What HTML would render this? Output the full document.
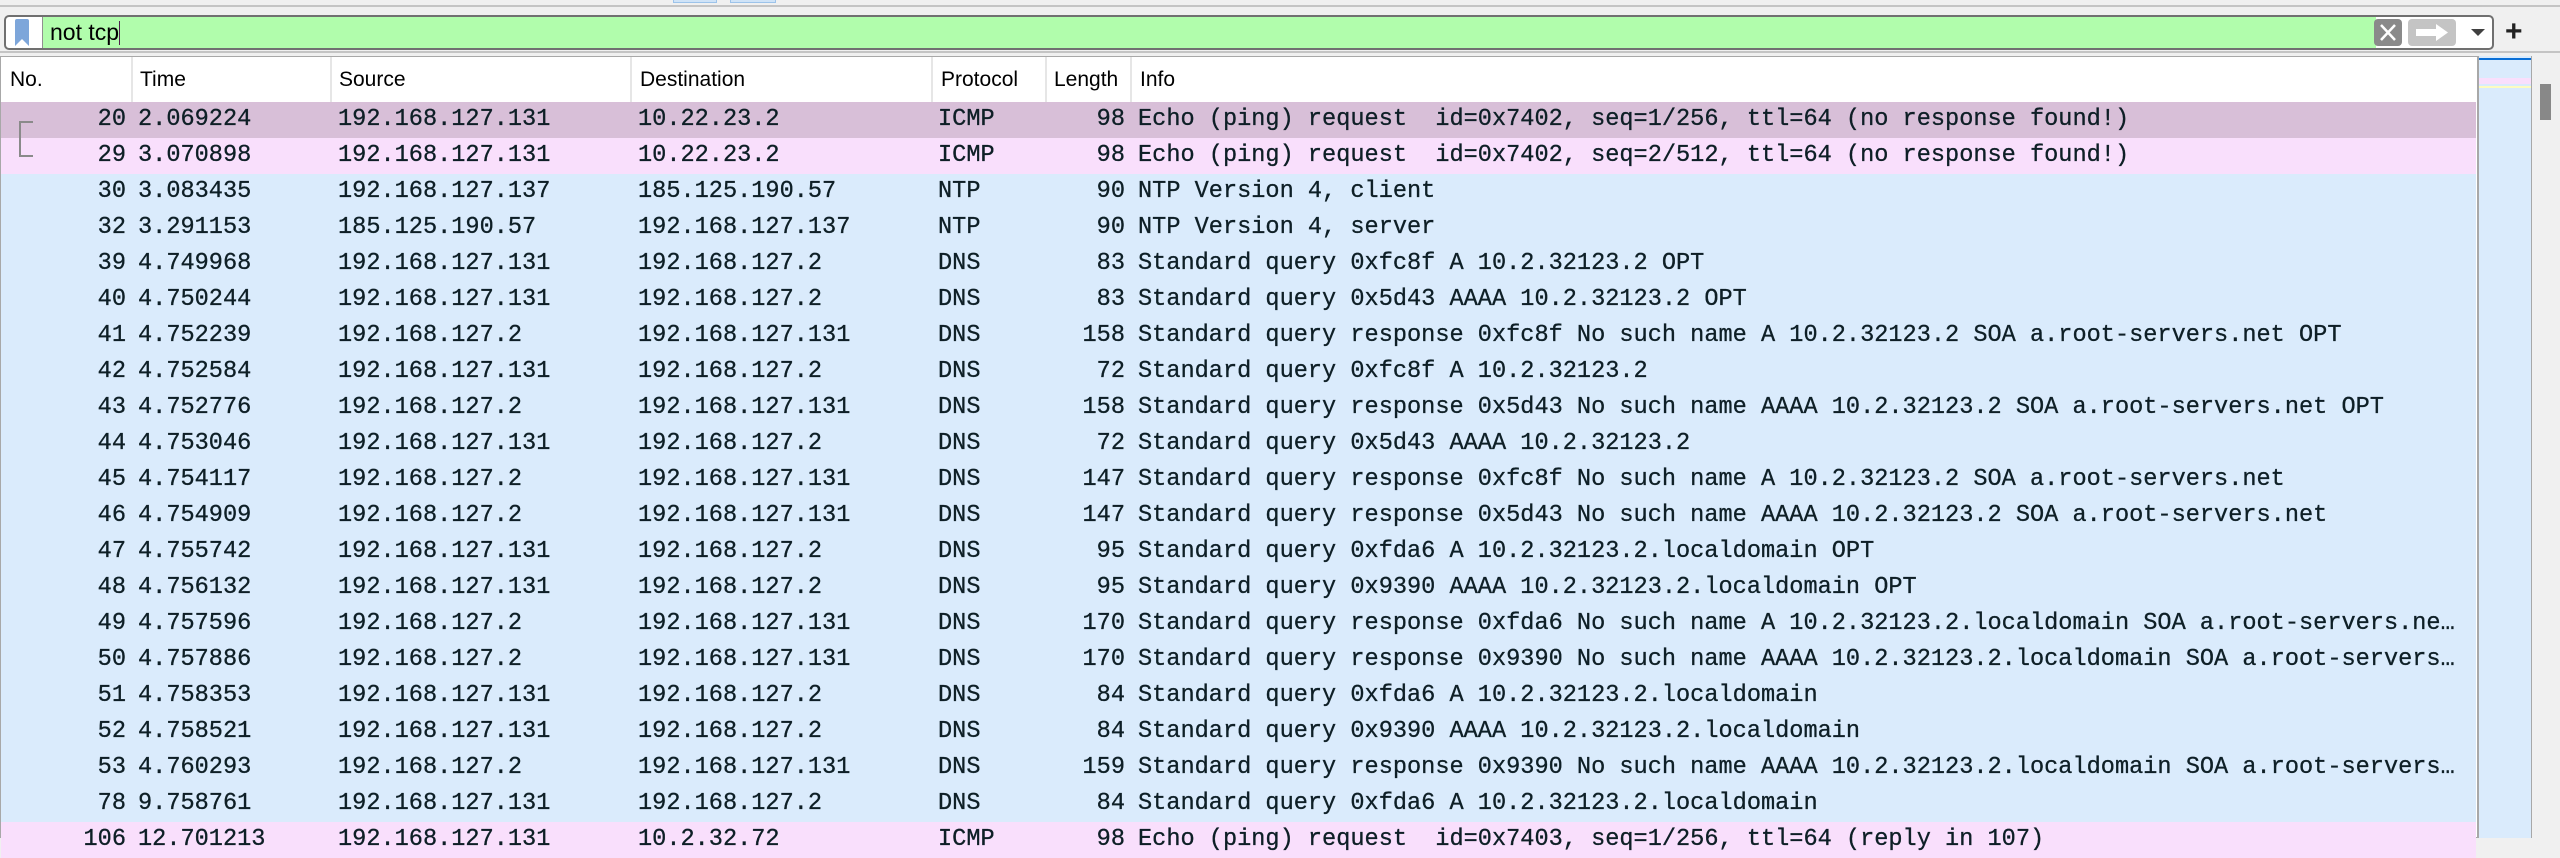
<!DOCTYPE html>
<html><head><meta charset="utf-8"><style>
*{margin:0;padding:0;box-sizing:border-box}
body{width:2560px;height:838px;overflow:hidden;background:#f0f0f0;position:relative;font-family:"Liberation Sans",sans-serif}
.a{position:absolute}
.hdr{position:absolute;top:57px;height:45px;left:1px;width:2475px;background:#fff;font-size:21px;color:#000}
.hdr span{position:absolute;top:11px}
.sep{position:absolute;top:0;width:2px;height:45px;background:#e6e6e6}
.row{position:absolute;left:1px;width:2475px;height:36px;font-family:"Liberation Mono",monospace;font-size:23.6px;line-height:36px;color:#0e1f26;white-space:pre;overflow:hidden;-webkit-text-stroke:0.3px #0e1f26}
.row span{position:absolute;top:0}
.no{right:auto;width:125px;text-align:right;left:0}
.len{width:1124px;text-align:right;left:0}
.c1{left:137px}.c2{left:337px}.c3{left:637px}.c4{left:937px}.c5{left:1137px;width:1336px;overflow:hidden;text-overflow:ellipsis}
.b{background:#daebfc}.p{background:#f9dffc}.s{background:#d8bfd8}
</style></head><body>
<div class="a" style="left:673px;top:0;width:44px;height:3px;background:#cfe3f7;border:1px solid #9cc3ea;border-top:none"></div>
<div class="a" style="left:730px;top:0;width:46px;height:3px;background:#cfe3f7;border:1px solid #9cc3ea;border-top:none"></div>
<div class="a" style="left:0;top:5px;width:2560px;height:2px;background:#c4c4c4"></div>
<div class="a" style="left:0;top:51px;width:2560px;height:2px;background:#c4c4c4"></div>
<div class="a" style="left:4px;top:15px;width:2490px;height:35px;border:2px solid #707070;border-radius:5px;background:#fff;overflow:hidden">
 <div class="a" style="left:36px;top:0;width:2334px;height:31px;background:#b1fdac;border-left:1px solid #909090"></div>
 <svg class="a" style="left:8px;top:2px" width="16" height="27"><path d="M1 2 Q1 0 3 0 H13 Q15 0 15 2 V27 L8 20 L1 27Z" fill="#7da6da"/></svg>
 <div class="a" style="left:44px;top:2px;font-size:23px;color:#000;line-height:27px">not tcp<span style="display:inline-block;width:1px;height:24px;background:#502050;vertical-align:-5px"></span></div>
 <div class="a" style="left:2368px;top:2px;width:28px;height:27px;background:#8a8a8a;border-radius:4px"><svg width="28" height="27"><path d="M7 6 L21 21 M21 6 L7 21" stroke="#fff" stroke-width="2.5"/></svg></div>
 <div class="a" style="left:2402px;top:2px;width:48px;height:27px;background:#c4c4c4;border-radius:4px"><svg width="48" height="27"><path d="M8 10 H28 V5 L40 13.5 L28 22 V17 H8Z" fill="#fff"/></svg></div>
 <svg class="a" style="left:2465px;top:10px" width="14" height="10"><path d="M0 2 H14 L7 9Z" fill="#404040"/></svg>
</div>
<div class="a" style="left:2505px;top:19px;font-size:30px;font-weight:bold;color:#222;line-height:26px">+</div>
<div class="a" style="left:0;top:56px;width:2478px;height:782px;border:1px solid #a8a8a8;background:#fff"></div>
<div class="hdr">
 <span style="left:9px">No.</span><div class="sep" style="left:130px"></div>
 <span style="left:139px">Time</span><div class="sep" style="left:329px"></div>
 <span style="left:338px">Source</span><div class="sep" style="left:629px"></div>
 <span style="left:639px">Destination</span><div class="sep" style="left:930px"></div>
 <span style="left:940px">Protocol</span><div class="sep" style="left:1044px"></div>
 <span style="left:1053px">Length</span><div class="sep" style="left:1129px"></div>
 <span style="left:1139px">Info</span>
</div>
<div class="row s" style="top:102px"><span class="no">20</span><span class="c1">2.069224</span><span class="c2">192.168.127.131</span><span class="c3">10.22.23.2</span><span class="c4">ICMP</span><span class="len">98</span><span class="c5">Echo (ping) request  id=0x7402, seq=1/256, ttl=64 (no response found!)</span></div>
<div class="row p" style="top:138px"><span class="no">29</span><span class="c1">3.070898</span><span class="c2">192.168.127.131</span><span class="c3">10.22.23.2</span><span class="c4">ICMP</span><span class="len">98</span><span class="c5">Echo (ping) request  id=0x7402, seq=2/512, ttl=64 (no response found!)</span></div>
<div class="row b" style="top:174px"><span class="no">30</span><span class="c1">3.083435</span><span class="c2">192.168.127.137</span><span class="c3">185.125.190.57</span><span class="c4">NTP</span><span class="len">90</span><span class="c5">NTP Version 4, client</span></div>
<div class="row b" style="top:210px"><span class="no">32</span><span class="c1">3.291153</span><span class="c2">185.125.190.57</span><span class="c3">192.168.127.137</span><span class="c4">NTP</span><span class="len">90</span><span class="c5">NTP Version 4, server</span></div>
<div class="row b" style="top:246px"><span class="no">39</span><span class="c1">4.749968</span><span class="c2">192.168.127.131</span><span class="c3">192.168.127.2</span><span class="c4">DNS</span><span class="len">83</span><span class="c5">Standard query 0xfc8f A 10.2.32123.2 OPT</span></div>
<div class="row b" style="top:282px"><span class="no">40</span><span class="c1">4.750244</span><span class="c2">192.168.127.131</span><span class="c3">192.168.127.2</span><span class="c4">DNS</span><span class="len">83</span><span class="c5">Standard query 0x5d43 AAAA 10.2.32123.2 OPT</span></div>
<div class="row b" style="top:318px"><span class="no">41</span><span class="c1">4.752239</span><span class="c2">192.168.127.2</span><span class="c3">192.168.127.131</span><span class="c4">DNS</span><span class="len">158</span><span class="c5">Standard query response 0xfc8f No such name A 10.2.32123.2 SOA a.root-servers.net OPT</span></div>
<div class="row b" style="top:354px"><span class="no">42</span><span class="c1">4.752584</span><span class="c2">192.168.127.131</span><span class="c3">192.168.127.2</span><span class="c4">DNS</span><span class="len">72</span><span class="c5">Standard query 0xfc8f A 10.2.32123.2</span></div>
<div class="row b" style="top:390px"><span class="no">43</span><span class="c1">4.752776</span><span class="c2">192.168.127.2</span><span class="c3">192.168.127.131</span><span class="c4">DNS</span><span class="len">158</span><span class="c5">Standard query response 0x5d43 No such name AAAA 10.2.32123.2 SOA a.root-servers.net OPT</span></div>
<div class="row b" style="top:426px"><span class="no">44</span><span class="c1">4.753046</span><span class="c2">192.168.127.131</span><span class="c3">192.168.127.2</span><span class="c4">DNS</span><span class="len">72</span><span class="c5">Standard query 0x5d43 AAAA 10.2.32123.2</span></div>
<div class="row b" style="top:462px"><span class="no">45</span><span class="c1">4.754117</span><span class="c2">192.168.127.2</span><span class="c3">192.168.127.131</span><span class="c4">DNS</span><span class="len">147</span><span class="c5">Standard query response 0xfc8f No such name A 10.2.32123.2 SOA a.root-servers.net</span></div>
<div class="row b" style="top:498px"><span class="no">46</span><span class="c1">4.754909</span><span class="c2">192.168.127.2</span><span class="c3">192.168.127.131</span><span class="c4">DNS</span><span class="len">147</span><span class="c5">Standard query response 0x5d43 No such name AAAA 10.2.32123.2 SOA a.root-servers.net</span></div>
<div class="row b" style="top:534px"><span class="no">47</span><span class="c1">4.755742</span><span class="c2">192.168.127.131</span><span class="c3">192.168.127.2</span><span class="c4">DNS</span><span class="len">95</span><span class="c5">Standard query 0xfda6 A 10.2.32123.2.localdomain OPT</span></div>
<div class="row b" style="top:570px"><span class="no">48</span><span class="c1">4.756132</span><span class="c2">192.168.127.131</span><span class="c3">192.168.127.2</span><span class="c4">DNS</span><span class="len">95</span><span class="c5">Standard query 0x9390 AAAA 10.2.32123.2.localdomain OPT</span></div>
<div class="row b" style="top:606px"><span class="no">49</span><span class="c1">4.757596</span><span class="c2">192.168.127.2</span><span class="c3">192.168.127.131</span><span class="c4">DNS</span><span class="len">170</span><span class="c5">Standard query response 0xfda6 No such name A 10.2.32123.2.localdomain SOA a.root-servers.ne…</span></div>
<div class="row b" style="top:642px"><span class="no">50</span><span class="c1">4.757886</span><span class="c2">192.168.127.2</span><span class="c3">192.168.127.131</span><span class="c4">DNS</span><span class="len">170</span><span class="c5">Standard query response 0x9390 No such name AAAA 10.2.32123.2.localdomain SOA a.root-servers…</span></div>
<div class="row b" style="top:678px"><span class="no">51</span><span class="c1">4.758353</span><span class="c2">192.168.127.131</span><span class="c3">192.168.127.2</span><span class="c4">DNS</span><span class="len">84</span><span class="c5">Standard query 0xfda6 A 10.2.32123.2.localdomain</span></div>
<div class="row b" style="top:714px"><span class="no">52</span><span class="c1">4.758521</span><span class="c2">192.168.127.131</span><span class="c3">192.168.127.2</span><span class="c4">DNS</span><span class="len">84</span><span class="c5">Standard query 0x9390 AAAA 10.2.32123.2.localdomain</span></div>
<div class="row b" style="top:750px"><span class="no">53</span><span class="c1">4.760293</span><span class="c2">192.168.127.2</span><span class="c3">192.168.127.131</span><span class="c4">DNS</span><span class="len">159</span><span class="c5">Standard query response 0x9390 No such name AAAA 10.2.32123.2.localdomain SOA a.root-servers…</span></div>
<div class="row b" style="top:786px"><span class="no">78</span><span class="c1">9.758761</span><span class="c2">192.168.127.131</span><span class="c3">192.168.127.2</span><span class="c4">DNS</span><span class="len">84</span><span class="c5">Standard query 0xfda6 A 10.2.32123.2.localdomain</span></div>
<div class="row p" style="top:822px"><span class="no">106</span><span class="c1">12.701213</span><span class="c2">192.168.127.131</span><span class="c3">10.2.32.72</span><span class="c4">ICMP</span><span class="len">98</span><span class="c5">Echo (ping) request  id=0x7403, seq=1/256, ttl=64 (reply in 107)</span></div>
<div class="a" style="left:19px;top:121px;width:14px;height:36px;border:2px solid #8a8a8a;border-right:none"></div>
<div class="a" style="left:2478px;top:56px;width:54px;height:782px;background:#daebfc;border-left:1px solid #a8a8a8;border-right:1px solid #a8a8a8"></div>
<div class="a" style="left:2479px;top:58px;width:52px;height:2px;background:#0a6fd6"></div>
<div class="a" style="left:2479px;top:78px;width:52px;height:6px;background:#f9dffc"></div>
<div class="a" style="left:2479px;top:86px;width:52px;height:2px;background:#fdfcc0"></div>
<div class="a" style="left:2533px;top:56px;width:27px;height:782px;background:#f0f0f0"></div>
<div class="a" style="left:2540px;top:84px;width:11px;height:36px;background:#888"></div>
</body></html>
